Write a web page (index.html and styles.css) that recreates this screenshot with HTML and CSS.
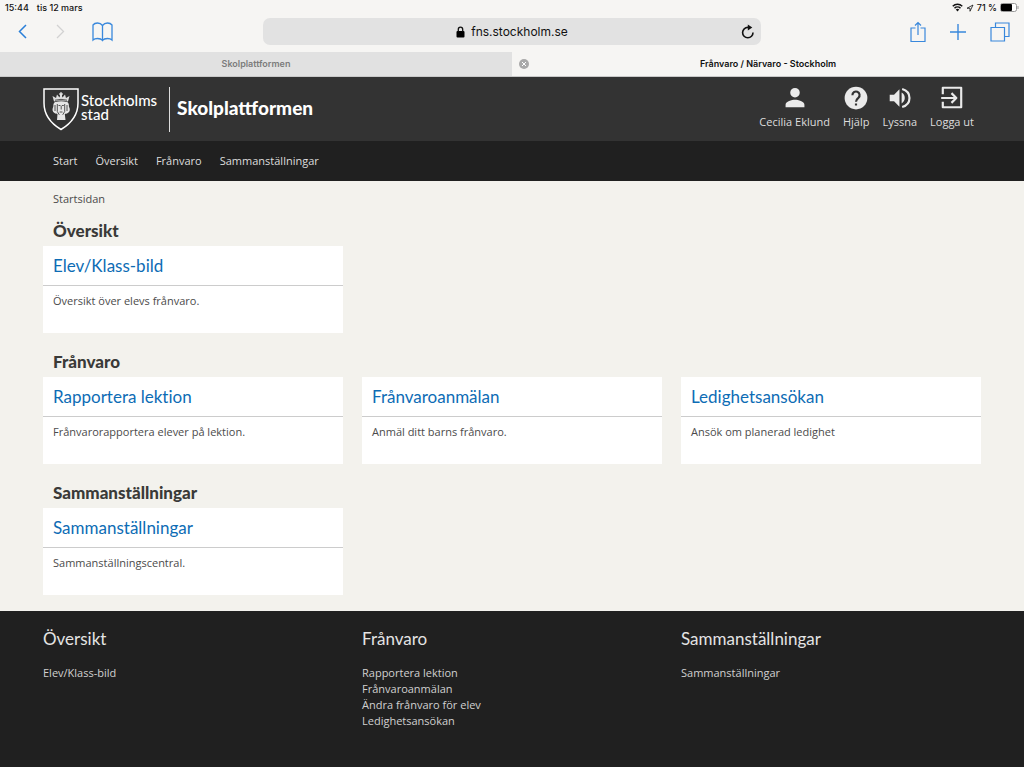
FILE: index.html
```html
<!DOCTYPE html>
<html lang="sv">
<head>
<meta charset="utf-8">
<meta name="viewport" content="width=device-width, initial-scale=1">
<title>Frånvaro / Närvaro - Stockholm</title>
<link rel="stylesheet" href="styles.css">
</head>
<body>
<div class="browser">
  <div class="status">
    <span class="status-group"><span>15:44</span><span>tis 12 mars</span></span>
    <span class="status-right">
      <svg width="11" height="9" viewBox="0 0 22 18" fill="none" stroke="#111" stroke-width="3"><path d="M1.500 6.500a13.500 13.500 0 0 1 19 0M5 10.500a8.500 8.500 0 0 1 12 0"/><path d="M7.500 13a5 5 0 0 1 7 0L11 17z" fill="#111" stroke="none"/></svg>
      <svg width="8" height="8" viewBox="0 0 16 16" fill="none" stroke="#111" stroke-width="1.600" stroke-linejoin="round"><path d="M14 2 2 8.500h6V14.500z"/></svg>
      <span>71 %</span>
      <svg width="19" height="9" viewBox="0 0 19 9"><rect x="0.500" y="0.500" width="16" height="8" rx="2" fill="#fff" stroke="#999"/><rect x="1" y="1" width="11" height="7" rx="1" fill="#000"/><path d="M18 3v3" stroke="#999"/></svg>
    </span>
  </div>
  <div class="toolbar">
    <div class="tools">
      <button class="tool" aria-label="Bakåt"><svg width="10" height="15" viewBox="0 0 10 15" fill="none" stroke="#2a7fd8" stroke-width="1.500"><path d="M8 1 1.500 7.500 8 14"/></svg></button>
      <button class="tool" aria-label="Framåt"><svg width="10" height="15" viewBox="0 0 10 15" fill="none" stroke="#d2d2d2" stroke-width="1.300"><path d="M2 1l6.500 6.500L2 14"/></svg></button>
      <button class="tool" aria-label="Bokmärken"><svg width="21" height="20" viewBox="0 0 21 20" fill="none" stroke="#3988dc" stroke-width="1.300"><path d="M10.500 3.500C9 1.500 7.500 1 5.500 1S2 1.700 1 3v15c1-1 2.500-1.500 4.500-1.500s4 .5 5 2c1-1.500 3-2 5-2s3.500.5 4.500 1.500V3c-1-1.300-2.500-2-4.500-2s-3.500.5-5 2.500zv15"/></svg></button>
    </div>
    <div class="address">
      <svg width="9" height="12" viewBox="0 0 9 12"><rect x="0.500" y="5" width="8" height="6.500" rx="1"/><path d="M2.300 5.500V3.400a2.200 2.200 0 0 1 4.400 0v2.100" fill="none" stroke="#111" stroke-width="1.300"/></svg>
      <span>fns.stockholm.se</span>
      <button class="reload" aria-label="Läs in igen"><svg width="14" height="16" viewBox="0 0 14 16"><path d="M12 8.500A5.200 5.200 0 1 1 7 3.400h2" fill="none" stroke="#111" stroke-width="1.600"/><path d="M6.800.5 11.300 3.500 6.800 6.600z" fill="#111"/></svg></button>
    </div>
    <div class="tools tools-right">
      <button class="tool" aria-label="Dela"><svg width="16" height="22" viewBox="0 0 16 22" fill="none" stroke="#3988dc" stroke-width="1.200"><path d="M5.500 7H1v13.500h14V7h-4.500M8 14V2M5 4.500l3-3 3 3"/></svg></button>
      <button class="tool" aria-label="Ny flik"><svg width="18" height="18" viewBox="0 0 18 18" stroke="#3988dc" stroke-width="1.400"><path d="M1 9h16M9 1v16"/></svg></button>
      <button class="tool" aria-label="Flikar"><svg width="20" height="20" viewBox="0 0 20 20" fill="none" stroke="#3988dc" stroke-width="1.200"><path d="M1 5.500h13.500V19H1zM5.500 5.500V1H19v13.500h-4.500"/></svg></button>
    </div>
  </div>
  <div class="tabs">
    <div class="tab tab-idle">Skolplattformen</div>
    <div class="tab">
      <button class="tab-close" aria-label="Stäng flik"><svg width="10" height="10" viewBox="0 0 10 10"><circle cx="5" cy="5" r="5" fill="#a9a9a9"/><path d="M3 3l4 4M7 3 3 7" stroke="#fff"/></svg></button>
      Frånvaro / Närvaro - Stockholm
    </div>
  </div>
</div>

<header class="header">
  <a class="brand" href="#">
    <svg width="36" height="44" viewBox="0 0 36 44">
      <path d="M1 2h34v14c0 12-7 20.500-17 26.500C8 36.500 1 28 1 16z" fill="none" stroke="#fff" stroke-width="1.500"/>
      <path d="M11 14.500 9.500 9l3.500 2 1-3.500 2.500 3L18 6l1.500 4.500 2.500-3 1 3.500 3.500-2-1.500 5.500q-7-2-14 0z" fill="#ddd"/>
      <path d="M16 7h4M18 5v4" stroke="#fff"/>
      <path d="M12 15c-2.500 2-1 3.500-2 5.500s-.5 4.500 1.500 5.500c1 1 2.500.5 3 1L14 33h8.500l-.7-6c.5-.5 2 0 3-1 2-1 2.500-3.500 1.500-5.500s.500-3.500-2-5.500q-6-1.500-12.300 0z" fill="#e6e6e6"/>
      <path d="M14.300 17v7.500l2 3.300M21.700 17v7.500l-2 3.300M15.500 18.500h2M18.800 18.500h2M18.200 19v3.500M16.700 25h2.800M12 18v6M24 18v6M12 13.200q6-1.700 12 0" fill="none" stroke="#444" stroke-width=".9"/>
    </svg>
    <span class="city"><span>Stockholms</span><span>stad</span></span>
    <span class="product">Skolplattformen</span>
  </a>
  <div class="actions">
    <a class="action" href="#"><svg width="26" height="26" viewBox="0 0 24 24"><path d="M12 11.500a4.400 4.400 0 1 0 0-8.800 4.400 4.400 0 0 0 0 8.800zM3.300 20.500v-2.300c0-3 5.800-4.500 8.700-4.500s8.700 1.500 8.700 4.500v2.300z"/></svg>Cecilia Eklund</a>
    <a class="action" href="#"><svg width="26" height="26" viewBox="0 0 24 24"><circle cx="12" cy="12" r="10.500"/><path d="M8.700 9.500a3.300 3.300 0 1 1 5.600 2.200c-1.400 1.300-2.300 1.900-2.300 3.800M12 17v2" fill="none" stroke="#333" stroke-width="2"/></svg>Hjälp</a>
    <a class="action" href="#"><svg width="26" height="26" viewBox="0 0 24 24"><path d="M2.500 9v6h4l5 5V4l-5 5zM13.500 7v10c3.900-1.900 3.900-8.100 0-10z"/><path d="M14 3.700c9 2.500 9 14.100 0 16.600" fill="none" stroke="#eaeaea" stroke-width="2"/></svg>Lyssna</a>
    <a class="action" href="#"><svg width="26" height="26" viewBox="0 0 24 24"><path d="M3.500 8.500v-6h17v18h-17v-5M2 12h13M11.500 7.500 16 12l-4.500 4.500" fill="none" stroke="#eaeaea" stroke-width="2" stroke-linejoin="round"/></svg>Logga ut</a>
  </div>
</header>
<nav class="nav">
  <a href="#">Start</a><a href="#">Översikt</a><a href="#">Frånvaro</a><a href="#">Sammanställningar</a>
</nav>

<main class="main">
  <a class="crumb" href="#">Startsidan</a>
  <section class="section">
    <h2>Översikt</h2>
    <div class="columns">
      <article class="card"><h3><a href="#">Elev/Klass-bild</a></h3><p>Översikt över elevs frånvaro.</p></article>
    </div>
  </section>
  <section class="section">
    <h2>Frånvaro</h2>
    <div class="columns">
      <article class="card"><h3><a href="#">Rapportera lektion</a></h3><p>Frånvarorapportera elever på lektion.</p></article>
      <article class="card"><h3><a href="#">Frånvaroanmälan</a></h3><p>Anmäl ditt barns frånvaro.</p></article>
      <article class="card"><h3><a href="#">Ledighetsansökan</a></h3><p>Ansök om planerad ledighet</p></article>
    </div>
  </section>
  <section class="section">
    <h2>Sammanställningar</h2>
    <div class="columns">
      <article class="card"><h3><a href="#">Sammanställningar</a></h3><p>Sammanställningscentral.</p></article>
    </div>
  </section>
</main>

<footer class="footer">
  <div class="columns">
    <div class="links"><h4>Översikt</h4><a href="#">Elev/Klass-bild</a></div>
    <div class="links"><h4>Frånvaro</h4><a href="#">Rapportera lektion</a><a href="#">Frånvaroanmälan</a><a href="#">Ändra frånvaro för elev</a><a href="#">Ledighetsansökan</a></div>
    <div class="links"><h4>Sammanställningar</h4><a href="#">Sammanställningar</a></div>
  </div>
</footer>
</body>
</html>
```

FILE: styles.css
```css
* { box-sizing: border-box; }
body {
  margin: 0;
  min-height: 100vh;
  display: flex;
  flex-direction: column;
  background: #f3f2ed;
  color: #4b4b4b;
  font: 11px/16px "Open Sans", sans-serif;
}
h2, h3, h4, p { margin: 0; }
a { color: inherit; text-decoration: none; }
button { padding: 0; border: 0; background: none; display: flex; }
svg { display: block; flex: none; }

.browser { background: #f6f5f3; color: #111; font-family: Inter, sans-serif; }
.status {
  display: flex;
  justify-content: space-between;
  height: 15px;
  padding: 0 5px;
  font-size: 9px;
  line-height: 15px;
  font-weight: 500;
}
.status-group { display: flex; gap: 8px; }
.status-right { display: flex; align-items: center; gap: 3px; }
.toolbar {
  display: grid;
  grid-template-columns: 1fr 498px 1fr;
  align-items: center;
  height: 37px;
  padding-bottom: 4px;
}
.tools { display: flex; align-items: center; gap: 27px; padding-left: 18px; }
.tools-right { justify-content: flex-end; gap: 23px; padding: 0 14px 0 0; }
.address {
  position: relative;
  display: flex;
  align-items: center;
  justify-content: center;
  gap: 6px;
  height: 27px;
  border-radius: 7px;
  background: #e2e2e2;
  font-size: 12px;
}
.reload { position: absolute; right: 6px; }
.tabs { display: grid; grid-template-columns: 1fr 1fr; height: 25px; border-bottom: 1px solid #c9c9c9; }
.tab {
  position: relative;
  display: flex;
  align-items: center;
  justify-content: center;
  font-size: 9px;
  font-weight: 600;
}
.tab-idle { background: #e1e1e1; color: #7c7c7c; }
.tab-close { position: absolute; left: 7px; }

.header {
  display: flex;
  justify-content: space-between;
  height: 64px;
  padding: 0 50px 0 43px;
  background: #333;
  color: #fff;
}
.brand { display: flex; align-items: center; font-family: Lato, sans-serif; }
.city {
  display: flex;
  flex-direction: column;
  padding: 0 12px 4px 2px;
  font-size: 15px;
  line-height: 14px;
  font-weight: 500;
}
.product {
  display: flex;
  align-items: center;
  height: 45px;
  padding: 0 0 3px 7px;
  border-left: 1px solid #ddd;
  font-size: 19px;
  font-weight: 900;
}
.actions { display: flex; gap: 13px; padding-top: 8px; }
.action {
  display: flex;
  flex-direction: column;
  align-items: center;
  gap: 3px;
  color: #ddd;
}
.action svg { fill: #eaeaea; }
.nav {
  display: flex;
  align-items: center;
  gap: 18px;
  height: 40px;
  padding: 0 53px;
  background: #202020;
  color: #ddd;
}

.main { padding: 10px 43px 16px; }
.crumb { display: block; padding-left: 10px; }
.section { padding-top: 14px; }
.section h2 {
  padding: 0 10px;
  margin-bottom: 6px;
  color: #3a3a38;
  font: 900 17px/19px Lato, sans-serif;
}
.section + .section { padding-top: 19px; }
.columns { display: grid; grid-template-columns: repeat(3, 1fr); gap: 19px; }
.card { min-height: 87px; background: #fff; }
.card h3 {
  padding: 8px 10px 7px;
  border-bottom: 1px solid #ccc;
  color: #0d6cb5;
  font: 400 17px/24px Lato, sans-serif;
  font-variant-ligatures: none;
}
.card p { padding: 7px 10px; }

.footer { flex: 1; padding: 16px 43px; background: #202020; color: #d0d0d0; }
.links { display: flex; flex-direction: column; }
.links h4 {
  margin-bottom: 14px;
  color: #e4e4e4;
  font: 400 17px/24px Lato, sans-serif;
}
```
